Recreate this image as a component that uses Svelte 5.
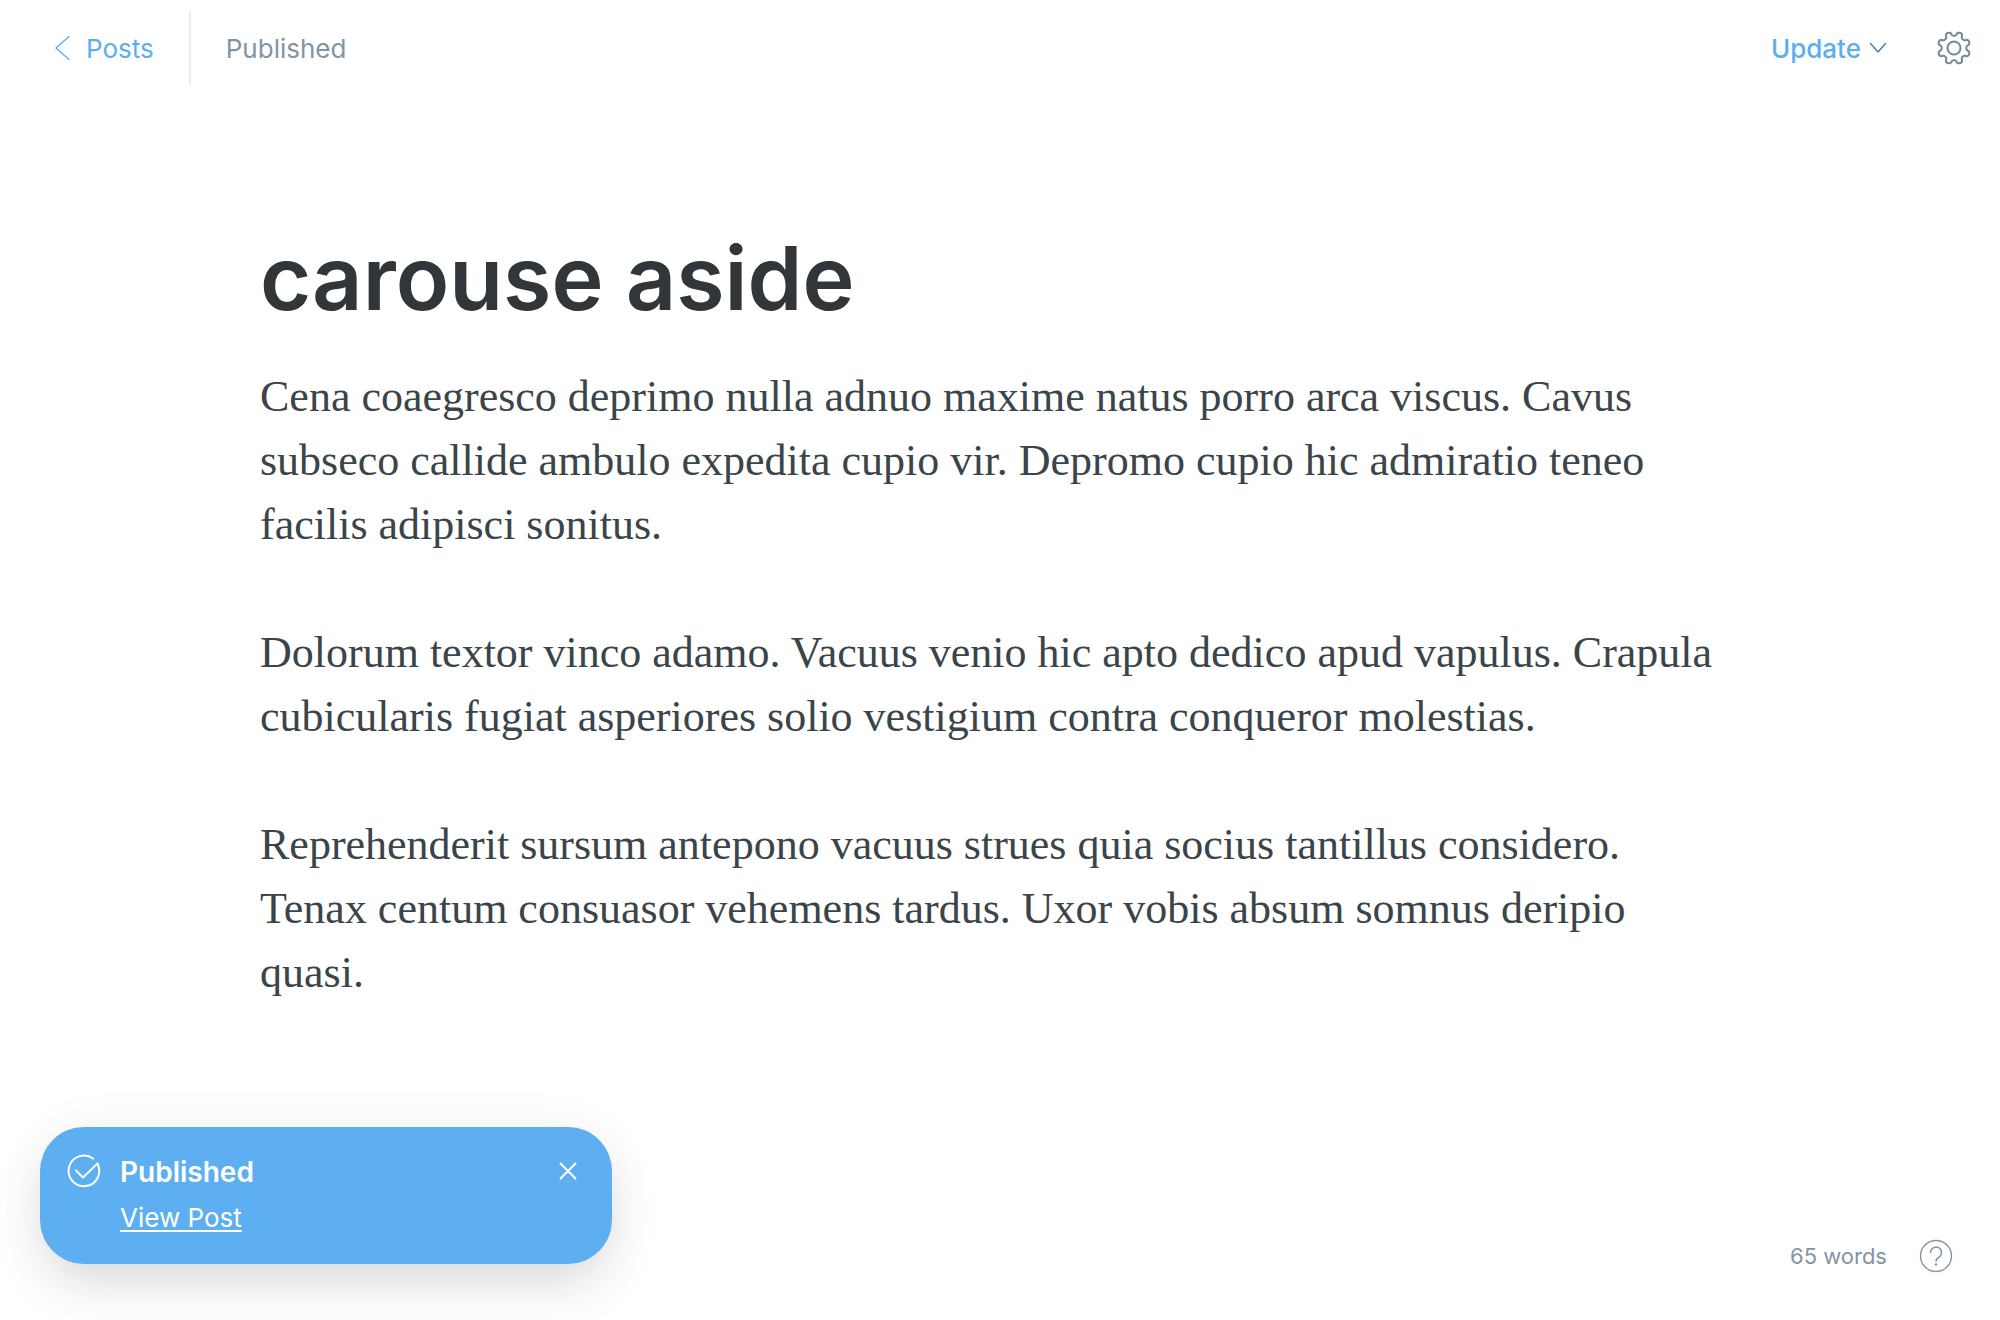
<script>
  const title = 'carouse aside';
  const paragraphs = [
    'Cena coaegresco deprimo nulla adnuo maxime natus porro arca viscus. Cavus subseco callide ambulo expedita cupio vir. Depromo cupio hic admiratio teneo facilis adipisci sonitus.',
    'Dolorum textor vinco adamo. Vacuus venio hic apto dedico apud vapulus. Crapula cubicularis fugiat asperiores solio vestigium contra conqueror molestias.',
    'Reprehenderit sursum antepono vacuus strues quia socius tantillus considero. Tenax centum consuasor vehemens tardus. Uxor vobis absum somnus deripio quasi.'
  ];
  let toastOpen = $state(true);

  // Outline of a gear with eight rounded teeth, centred in a 34-unit box.
  const steps = 160;
  const gear = Array.from({ length: steps }, (_, i) => {
    const t = (i / steps) * Math.PI * 2;
    const r = 14.3 - 2 * Math.cos(8 * t);
    const a = t + 0.045 * Math.sin(16 * t);
    return `${(17 + r * Math.sin(a)).toFixed(2)},${(17 - r * Math.cos(a)).toFixed(2)}`;
  }).join(' ');
</script>

<div class="editor">
  <header class="topbar">
    <nav class="crumbs">
      <a class="back" href="#posts">
        <svg width="16" height="26" viewBox="0 0 16 26" aria-hidden="true"><path d="M15 1.500 2 13l13 11.500" /></svg>
        Posts
      </a>
      <span class="status">Published</span>
    </nav>
    <div class="actions">
      <button class="update" type="button">
        Update
        <svg width="18" height="12" viewBox="0 0 18 12" aria-hidden="true"><path d="m1.500 1.500 7.500 8.500 7.500-8.500" /></svg>
      </button>
      <button class="icon-button gear" type="button" aria-label="Settings">
        <svg width="34" height="34" viewBox="0 0 34 34" aria-hidden="true">
          <circle cx="17" cy="17" r="6.500" />
          <polygon points={gear} />
        </svg>
      </button>
    </div>
  </header>

  <main class="post">
    <h1>{title}</h1>
    {#each paragraphs as text}
      <p>{text}</p>
    {/each}
  </main>

  <footer class="bottom">
    {#if toastOpen}
      <aside class="toast" role="status">
        <svg width="34" height="34" viewBox="0 0 34 34" aria-hidden="true">
          <path d="M26.200 4.700A15.300 15.300 0 1 0 30.400 9.600" />
          <path d="m9 16.500 7 7L30.400 9.600" />
        </svg>
        <div class="message">
          <strong>Published</strong>
          <a href="#view">View Post</a>
        </div>
        <button class="icon-button" type="button" aria-label="Close" onclick={() => (toastOpen = false)}>
          <svg width="18" height="18" viewBox="0 0 18 18" aria-hidden="true"><path d="m1.500 1.500 15 15m0-15-15 15" /></svg>
        </button>
      </aside>
    {/if}
    <div class="info">
      <span>65 words</span>
      <button class="icon-button" type="button" aria-label="Help">
        <svg width="34" height="34" viewBox="0 0 34 34" aria-hidden="true">
          <circle cx="17" cy="17" r="15.500" />
          <path d="M11.500 13.500a5.500 5.500 0 1 1 8.400 4.700c-1.900 1.200-2.900 2-2.900 4" />
          <circle class="dot" cx="17" cy="25.500" r="1.200" />
        </svg>
      </button>
    </div>
  </footer>
</div>

<style>
  :global(body) {
    margin: 0;
    background: #fff;
  }
  .editor {
    box-sizing: border-box;
    display: flex;
    flex-direction: column;
    min-height: 100vh;
    font-family: Inter, 'Liberation Sans', sans-serif;
    font-size: 26px;
    color: #394047;
  }
  svg {
    display: block;
    flex: none;
    fill: none;
    stroke: currentColor;
    stroke-width: 2;
    stroke-linecap: round;
    stroke-linejoin: round;
  }
  button {
    padding: 0;
    border: 0;
    background: none;
    color: inherit;
    font: inherit;
    cursor: pointer;
  }
  .topbar {
    display: flex;
    justify-content: space-between;
    align-items: center;
    padding: 12px 29px 12px 54px;
  }
  .crumbs,
  .actions,
  .info {
    display: flex;
    align-items: center;
  }
  .back {
    display: flex;
    align-items: center;
    gap: 16px;
    height: 72px;
    padding-right: 35px;
    border-right: 2px solid #e5eff5;
    color: #5baeef;
    text-decoration: none;
  }
  .back svg,
  .update svg {
    stroke-width: 1.3;
  }
  .status {
    padding-left: 35px;
    color: #8295a2;
  }
  .actions {
    gap: 50px;
  }
  .update {
    display: flex;
    align-items: center;
    gap: 8px;
    color: #5baeef;
    font-weight: 500;
  }
  .update svg {
    color: #3d79a8;
  }
  .gear {
    color: #738a94;
  }
  .post {
    flex: 1;
    padding: 128px 272px 0 260px;
  }
  h1 {
    margin: 0 0 33px;
    color: #303639;
    font-size: 88px;
    font-weight: 600;
    line-height: 108px;
  }
  p {
    margin: 0 0 64px;
    color: #3a4449;
    font-family: Georgia, 'Liberation Serif', serif;
    font-size: 44px;
    line-height: 64px;
  }
  .bottom {
    display: flex;
    justify-content: space-between;
    align-items: flex-end;
    padding: 0 47px 47px 40px;
  }
  .toast {
    box-sizing: border-box;
    display: flex;
    align-items: flex-start;
    gap: 19px;
    width: 572px;
    margin-bottom: 9px;
    padding: 27px 35px 28px 27px;
    border-radius: 44px;
    background: #5daff2;
    color: #fff;
    box-shadow: 0 0 64px rgba(0, 0, 0, 0.03), 0 22px 52px -6px rgba(0, 0, 0, 0.15);
  }
  .message {
    display: flex;
    flex: 1;
    flex-direction: column;
    align-items: flex-start;
    gap: 10px;
    line-height: 36px;
  }
  .message strong {
    font-size: 28px;
    font-weight: 600;
  }
  .message a {
    color: inherit;
    text-underline-offset: 3px;
    text-decoration-thickness: 2px;
  }
  .toast .icon-button {
    padding-top: 8px;
  }
  .info {
    margin-left: auto;
    gap: 32px;
    color: #8295a2;
    font-size: 22px;
  }
  .info svg {
    stroke-width: 1.4;
  }
  .info .dot {
    fill: currentColor;
    stroke: none;
  }
</style>
